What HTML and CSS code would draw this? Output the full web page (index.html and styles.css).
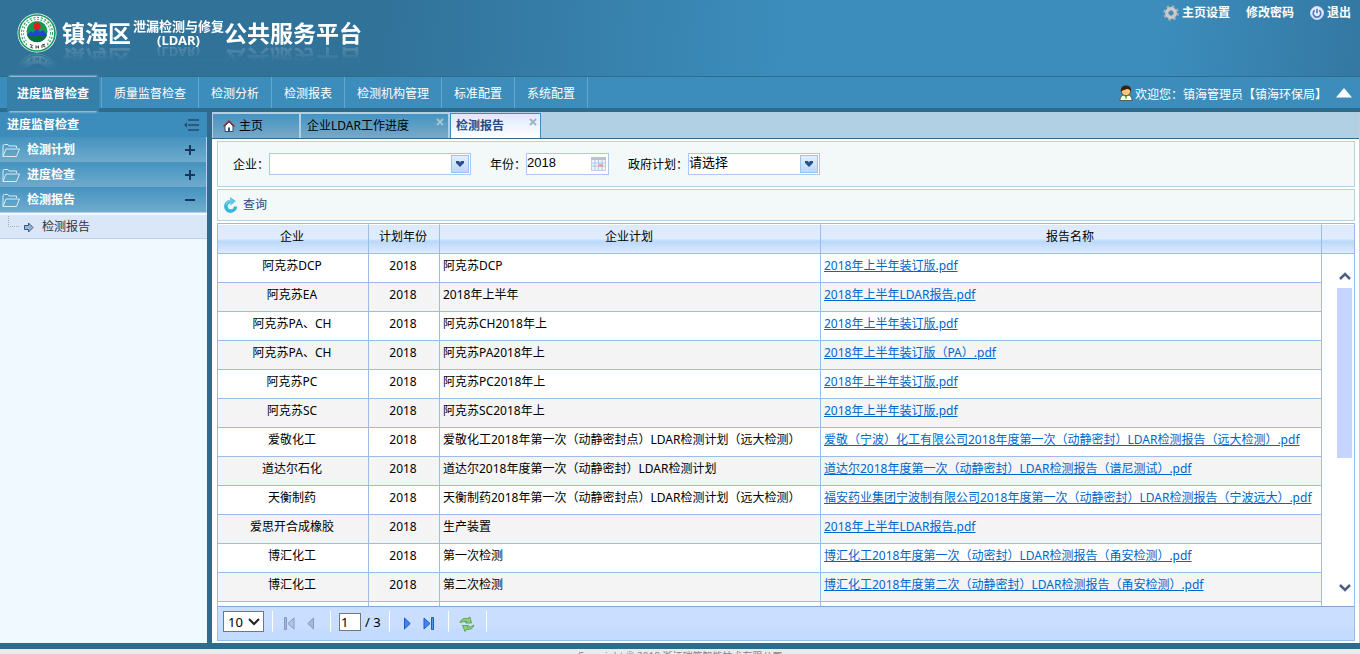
FILE: index.html
```html
<!DOCTYPE html>
<html lang="zh-CN">
<head>
    <meta charset="UTF-8">
    <meta name="viewport" content="width=device-width, initial-scale=1.0">
    <title>镇海区泄漏检测与修复(LDAR)公共服务平台</title>
    <link rel="stylesheet" href="styles.css">
</head>
<body>
    <header class="header">
        <div class="brand">
            <svg class="emblem" viewBox="0 0 40 40" aria-hidden="true">
                <circle cx="20" cy="20" r="19.5" fill="#fff"/>
                <circle cx="20" cy="20" r="18" fill="none" stroke="#159a58" stroke-width="1.6"/>
                <circle cx="20" cy="20" r="14.6" fill="none" stroke="#3aa871" stroke-width="3.2" stroke-dasharray="2 1.6"/>
                <circle cx="20" cy="20" r="14.6" fill="none" stroke="#fff" stroke-width="1"/>
                <circle cx="20" cy="18.5" r="10.5" fill="#169a52"/>
                <path d="M10 22l4-4 2 2 4-5 3 4 3-2 4 5z" fill="#2343d6"/>
                <path d="M10 22h20a10.5 10.5 0 0 1-20 0z" fill="#0b6b43"/>
                <circle cx="20" cy="13" r="3.6" fill="#f0141e"/>
                <path d="M10 29q10 6 20 0v5q-10 6-20 0z" fill="#fff"/>
                <path d="M13 31.500l2.500.8-2 2 2.500.8M19 32.500v3M21.500 32.500v3M19 34h2.500M25 35v-3l2.500-.8-1 2.300 2 .5" fill="none" stroke="#444" stroke-width="1"/>
            </svg>
            <h1 class="title">
                <span class="title-main">镇海区</span>
                <span class="title-sub"><span>泄漏检测与修复</span><span>(LDAR)</span></span>
                <span class="title-main">公共服务平台</span>
            </h1>
        </div>
        <div class="quick-links">
            <a href="#">
                <svg width="16" height="16" viewBox="0 0 16 16" aria-hidden="true">
                    <circle cx="8" cy="8" r="6.500" fill="none" stroke="#a9adb0" stroke-width="2.600" stroke-dasharray="2.600 2.500"/>
                    <circle cx="8" cy="8" r="4.200" fill="none" stroke="#c9cccf" stroke-width="3.400"/>
                    <circle cx="8" cy="8" r="2.200" fill="none" stroke="#888e92" stroke-width=".6"/>
                </svg>主页设置</a>
            <a href="#">修改密码</a>
            <a href="#">
                <svg width="14" height="14" viewBox="0 0 14 14" aria-hidden="true">
                    <circle cx="7" cy="7" r="6.500" fill="#e9effa" stroke="#c5d2e6"/>
                    <path d="M4.700 4.300a3.800 3.800 0 1 0 4.600 0M7 2.800v4.400" fill="none" stroke="#4d7cc7" stroke-width="1.700"/>
                </svg>退出</a>
        </div>
    </header>

    <nav class="nav">
        <ul class="menu">
            <li><a class="active" href="#">进度监督检查</a></li>
            <li><a href="#">质量监督检查</a></li>
            <li><a href="#">检测分析</a></li>
            <li><a href="#">检测报表</a></li>
            <li><a href="#">检测机构管理</a></li>
            <li><a href="#">标准配置</a></li>
            <li><a href="#">系统配置</a></li>
        </ul>
        <div class="user">
            <svg width="14" height="16" viewBox="0 0 14 16" aria-hidden="true">
                <path d="M1 15.500q0-5 4-5.500h4q4 .5 4 5.500z" fill="#fff" stroke="#4a4a3c" stroke-width=".8"/>
                <path d="M5.500 10.500h3L7 15z" fill="#5bb534"/>
                <circle cx="7" cy="6" r="4.700" fill="#fbc77c" stroke="#5a3716" stroke-width=".8"/>
                <path d="M1.800 6.500Q1.500.6 7 .6t5.200 5.900Q10.500 3.500 8 4 4 5 1.800 6.500z" fill="#3b2210"/>
            </svg>
            <span>欢迎您：镇海管理员【镇海环保局】</span>
            <button class="collapse-top" type="button" aria-label="收起">
                <svg width="16" height="10" viewBox="0 0 16 10"><path d="M8 0l8 9.500H0z" fill="#fff"/></svg>
            </button>
        </div>
    </nav>

    <div class="layout">
        <aside class="sidebar">
            <div class="sidebar-title">
                <h2>进度监督检查</h2>
                <button type="button" aria-label="折叠菜单">
                    <svg width="15" height="12" viewBox="0 0 15 12"><path d="M4 1h11M4 6h11M4 11h11" stroke="#234a66" stroke-width="1.600"/><path d="M0 6l3-2.500v5z" fill="#234a66"/></svg>
                </button>
            </div>
            <button class="group" type="button">
                <svg width="18" height="13" viewBox="0 0 18 13"><path d="M1 12.500V2q0-1.500 1.500-1.500H6L7 2h7.500v2M1 12.500L4 5h13.500L14.500 12.500z" fill="none" stroke="#d6ebf7"/></svg>
                <span>检测计划</span>
                <svg width="10" height="10" viewBox="0 0 10 10"><path d="M0 5h10M5 0v10" stroke="#17375e" stroke-width="2"/></svg>
            </button>
            <button class="group" type="button">
                <svg width="18" height="13" viewBox="0 0 18 13"><path d="M1 12.500V2q0-1.500 1.500-1.500H6L7 2h7.500v2M1 12.500L4 5h13.500L14.500 12.500z" fill="none" stroke="#d6ebf7"/></svg>
                <span>进度检查</span>
                <svg width="10" height="10" viewBox="0 0 10 10"><path d="M0 5h10M5 0v10" stroke="#17375e" stroke-width="2"/></svg>
            </button>
            <button class="group" type="button">
                <svg width="18" height="13" viewBox="0 0 18 13"><path d="M1 12.500V2q0-1.500 1.500-1.500H6L7 2h7.500v2M1 12.500L4 5h13.500L14.500 12.500z" fill="none" stroke="#d6ebf7"/></svg>
                <span>检测报告</span>
                <svg width="10" height="10" viewBox="0 0 10 10"><path d="M0 5h10" stroke="#17375e" stroke-width="2"/></svg>
            </button>
            <ul class="tree">
                <li>
                    <a href="#">
                        <svg width="26" height="22" viewBox="0 0 26 22"><path d="M.5 0v10.500H12" fill="none" stroke="#aaa" stroke-dasharray="1 1"/><path d="M16.500 9.500h4v-2.500l4.500 4.500-4.500 4.500v-2.500h-4z" fill="#8fb9dd" stroke="#3d5770"/></svg>
                        检测报告</a>
                </li>
            </ul>
        </aside>

        <main class="main">
            <div class="tabs">
                <div class="tab tab-home">
                    <svg width="12" height="12" viewBox="0 0 12 12"><path d="M2 6v5.500h8V6L6 2z" fill="#fff" stroke="#2f4a78"/><path d="M.5 6.500L6 1l5.500 5.500" fill="none" stroke="#8d3030" stroke-width="1.400"/><path d="M5 7.500h2V11H5z" fill="#2f4a78"/></svg>
                    <a href="#">主页</a>
                </div>
                <div class="tab">
                    <a href="#">企业LDAR工作进度</a>
                    <button type="button" aria-label="关闭"><svg width="8" height="8" viewBox="0 0 8 8"><path d="M1 1l6 6M7 1L1 7" stroke="#a3c3cf" stroke-width="2"/></svg></button>
                </div>
                <div class="tab selected">
                    <a href="#">检测报告</a>
                    <button type="button" aria-label="关闭"><svg width="8" height="8" viewBox="0 0 8 8"><path d="M1 1l6 6M7 1L1 7" stroke="#9bb8c2" stroke-width="2"/></svg></button>
                </div>
            </div>

            <div class="content">
                <form class="panel filters">
                    <div class="field">
                        <label for="company">企业：</label>
                        <span class="combo combo-wide">
                            <select id="company"><option></option></select>
                            <svg class="combo-arrow" viewBox="0 0 16 16"><path d="M4 5h3l1 1.500L9 5h3v2L8 11 4 7z" fill="#2a4f8f"/></svg>
                        </span>
                    </div>
                    <div class="field">
                        <label for="year">年份：</label>
                        <span class="combo combo-date">
                            <input type="text" id="year" value="2018">
                            <svg class="date-icon" viewBox="0 0 15 14"><path d="M.5.5h14v13H.5z" fill="#eef3fc" stroke="#c3cbdc"/><path d="M0 0h15v3H0z" fill="#b9c3d6"/><path d="M1 6h13M1 9h13M4 3v10M7.500 3v10M11 3v10" stroke="#b0c5ee"/><path d="M8 7h4v3H8z" fill="#eba48f"/></svg>
                        </span>
                    </div>
                    <div class="field">
                        <label for="plan">政府计划：</label>
                        <span class="combo combo-plan">
                            <select id="plan"><option>请选择</option></select>
                            <svg class="combo-arrow" viewBox="0 0 16 16"><path d="M4 5h3l1 1.500L9 5h3v2L8 11 4 7z" fill="#2a4f8f"/></svg>
                        </span>
                    </div>
                </form>

                <div class="panel toolbar">
                    <button class="query" type="button">
                        <svg width="16" height="16" viewBox="0 0 16 16"><path d="M12.500 9.500A4.800 4.800 0 1 1 7.500 4.500" fill="none" stroke="#35b7d8" stroke-width="3.600"/><path d="M7 0l6 4L7.500 8.500z" fill="#5cc8df"/><path d="M3 7.500a5 5 0 0 1 4.500-4" fill="none" stroke="#9de4f0"/></svg>
                        查询</button>
                </div>

                <section class="grid">
                    <div class="grid-view">
                        <table class="grid-table">
                            <colgroup>
                                <col class="col-company">
                                <col class="col-year">
                                <col class="col-plan">
                                <col>
                            </colgroup>
                            <thead>
                                <tr><th>企业</th><th>计划年份</th><th>企业计划</th><th>报告名称</th></tr>
                            </thead>
                            <tbody>
                                <tr><td>阿克苏DCP</td><td>2018</td><td>阿克苏DCP</td><td><a href="#">2018年上半年装订版.pdf</a></td></tr>
                                <tr><td>阿克苏EA</td><td>2018</td><td>2018年上半年</td><td><a href="#">2018年上半年LDAR报告.pdf</a></td></tr>
                                <tr><td>阿克苏PA、CH</td><td>2018</td><td>阿克苏CH2018年上</td><td><a href="#">2018年上半年装订版.pdf</a></td></tr>
                                <tr><td>阿克苏PA、CH</td><td>2018</td><td>阿克苏PA2018年上</td><td><a href="#">2018年上半年装订版（PA）.pdf</a></td></tr>
                                <tr><td>阿克苏PC</td><td>2018</td><td>阿克苏PC2018年上</td><td><a href="#">2018年上半年装订版.pdf</a></td></tr>
                                <tr><td>阿克苏SC</td><td>2018</td><td>阿克苏SC2018年上</td><td><a href="#">2018年上半年装订版.pdf</a></td></tr>
                                <tr><td>爱敬化工</td><td>2018</td><td>爱敬化工2018年第一次（动静密封点）LDAR检测计划（远大检测）</td><td><a href="#">爱敬（宁波）化工有限公司2018年度第一次（动静密封）LDAR检测报告（远大检测）.pdf</a></td></tr>
                                <tr><td>道达尔石化</td><td>2018</td><td>道达尔2018年度第一次（动静密封）LDAR检测计划</td><td><a href="#">道达尔2018年度第一次（动静密封）LDAR检测报告（谱尼测试）.pdf</a></td></tr>
                                <tr><td>天衡制药</td><td>2018</td><td>天衡制药2018年第一次（动静密封点）LDAR检测计划（远大检测）</td><td><a href="#">福安药业集团宁波制有限公司2018年度第一次（动静密封）LDAR检测报告（宁波远大）.pdf</a></td></tr>
                                <tr><td>爱思开合成橡胶</td><td>2018</td><td>生产装置</td><td><a href="#">2018年上半年LDAR报告.pdf</a></td></tr>
                                <tr><td>博汇化工</td><td>2018</td><td>第一次检测</td><td><a href="#">博汇化工2018年度第一次（动密封）LDAR检测报告（甬安检测）.pdf</a></td></tr>
                                <tr><td>博汇化工</td><td>2018</td><td>第二次检测</td><td><a href="#">博汇化工2018年度第二次（动静密封）LDAR检测报告（甬安检测）.pdf</a></td></tr>
                                <tr><td></td><td></td><td></td><td></td></tr>
                            </tbody>
                        </table>
                        <div class="scroll">
                            <div class="scroll-head"></div>
                            <div class="scroll-track">
                                <svg width="12" height="8" viewBox="0 0 12 8"><path d="M1 7l5-5 5 5" fill="none" stroke="#4d6185" stroke-width="2.500"/></svg>
                                <div class="scroll-thumb"></div>
                                <svg width="12" height="8" viewBox="0 0 12 8"><path d="M1 1l5 5 5-5" fill="none" stroke="#4d6185" stroke-width="2.500"/></svg>
                            </div>
                        </div>
                    </div>
                    <div class="pager">
                        <div class="pager-group">
                            <select class="page-size" aria-label="每页条数"><option>10</option></select>
                            <svg class="page-size-arrow" width="12" height="8" viewBox="0 0 12 8"><path d="M1 1l5 5 5-5" fill="none" stroke="#222" stroke-width="2"/></svg>
                        </div>
                        <div class="pager-group pager-prev">
                            <button type="button" aria-label="首页"><svg width="11" height="13" viewBox="0 0 11 13"><path d="M.5.500h2v12h-2z" fill="#a6b6d8" stroke="#8498c4"/><path d="M10 1v11L4 6.500z" fill="#b4c5e6" stroke="#8498c4"/></svg></button>
                            <button type="button" aria-label="上一页"><svg width="7" height="13" viewBox="0 0 7 13"><path d="M6.500 1v11L.8 6.500z" fill="#a6b9de" stroke="#8498c4"/></svg></button>
                        </div>
                        <div class="pager-group pager-page">
                            <input type="text" value="1" aria-label="页码">
                            <span>/ 3</span>
                        </div>
                        <div class="pager-group pager-next">
                            <button type="button" aria-label="下一页"><svg width="7" height="13" viewBox="0 0 7 13"><path d="M.5 1v11l5.700-5.500z" fill="#4384ee" stroke="#2458c5"/></svg></button>
                            <button type="button" aria-label="末页"><svg width="11" height="13" viewBox="0 0 11 13"><path d="M8.500.5h2v12h-2z" fill="#5a95f0" stroke="#2458c5"/><path d="M1 1v11l6-5.500z" fill="#4384ee" stroke="#2458c5"/></svg></button>
                        </div>
                        <div class="pager-group pager-refresh">
                            <button type="button" aria-label="刷新"><svg width="16" height="16" viewBox="0 0 16 16"><path d="M1 6.500Q3 1.500 9 2.500l2-1.500 1.500 6H6.500l1.500-1.500Q4.500 5 1 6.500z" fill="#8fce7d" stroke="#4b9a42" stroke-width=".8"/><path d="M15 9Q13.500 14 7.500 13.500l-1.500 2-2.500-6h6L8 11q4 .5 7-2z" fill="#8fce7d" stroke="#4b9a42" stroke-width=".8"/></svg></button>
                        </div>
                    </div>
                </section>
            </div>
        </main>
    </div>

    <footer class="footer">Copyright © 2018 浙江瑞策智能技术有限公司</footer>
</body>
</html>
```

FILE: styles.css
```css
* {
    box-sizing: border-box;
}
body {
    display: flex;
    flex-direction: column;
    height: 100vh;
    margin: 0;
    overflow: hidden;
    font: 12px/18px "Noto Sans", "Noto Sans CJK SC", sans-serif;
    color: #000;
    background: #fff;
}
h1, h2, ul {
    margin: 0;
    padding: 0;
}
ul {
    list-style: none;
}
a {
    color: inherit;
    text-decoration: none;
}
button, input, select {
    font: inherit;
    color: inherit;
}
button {
    display: flex;
    align-items: center;
    padding: 0;
    border: 0;
    background: none;
    cursor: pointer;
}
svg {
    flex: none;
}

/* header */
.header {
    display: flex;
    justify-content: space-between;
    align-items: flex-start;
    height: 76px;
    background: linear-gradient(95deg, #317299 0%, #317299 28%, #3c8dbc 58%, #3c8dbc 85%, #3478a3 100%);
}
.brand {
    display: flex;
    gap: 5px;
    padding: 13px 0 0 17px;
}
.emblem {
    width: 40px;
    height: 40px;
    -webkit-box-reflect: below 0 linear-gradient(transparent 60%, rgba(255, 255, 255, 0.25));
}
.title {
    display: flex;
    height: 34px;
    padding-top: 4px;
    color: #fff;
    -webkit-box-reflect: below -2px linear-gradient(transparent 50%, rgba(255, 255, 255, 0.2));
}
.title-main {
    font-size: 23px;
    line-height: 32px;
}
.title-sub {
    display: flex;
    flex-direction: column;
    align-items: center;
    padding: 2px 0 0 2px;
    font-size: 13px;
    line-height: 14px;
}
.quick-links {
    display: flex;
    gap: 16px;
    padding: 4px 9px 0 0;
    color: #fff;
    font-weight: bold;
}
.quick-links a {
    display: flex;
    align-items: center;
    gap: 3px;
}

/* main menu */
.nav {
    display: flex;
    justify-content: space-between;
    height: 36px;
    padding-left: 5px;
    color: #fff;
    background: #3c8dbc;
    border-top: 1px solid #2e6c8e;
    border-bottom: 4px solid #2e6c8e;
}
.menu {
    display: flex;
}
.menu li {
    border-right: 1px solid #63a7d0;
}
.menu a {
    display: block;
    padding: 0 12px;
    line-height: 34px;
}
.menu .active {
    position: relative;
    z-index: 1;
    margin: 0 2px;
    padding: 0 10px;
    font-weight: bold;
    background: #367fa9;
    box-shadow: 0 -3px 2px -2px #c5dcea, 0 3px 2px -2px #c5dcea;
}
.user {
    display: flex;
    align-items: center;
    gap: 2px;
    padding-right: 8px;
}
.user span {
    padding-top: 2px;
}
.user span,
.field label {
    font-family: "Noto Sans CJK TC", "Noto Sans CJK SC", sans-serif;
}
.collapse-top {
    margin-left: 7px;
}

.layout {
    display: flex;
    flex: 1;
    min-height: 0;
}

/* sidebar */
.sidebar {
    flex: none;
    width: 212px;
    background: #f0f9ff;
    border-right: 5px solid #2e6c8e;
}
.sidebar-title {
    display: flex;
    justify-content: space-between;
    align-items: center;
    height: 25px;
    padding: 0 8px 0 7px;
    color: #fff;
    background: #3c8dbc;
}
.sidebar-title h2 {
    font-size: 12px;
}
.group {
    width: 100%;
    height: 25px;
    gap: 7px;
    padding: 1px 11px 0 2px;
    color: #fff;
    font-weight: bold;
    text-align: left;
    background: linear-gradient(#4593bf, #6fabcd);
    border-right: 1px solid #b4d3ec;
}
.group span {
    flex: 1;
}
.tree {
    padding-top: 2px;
    border-top: 1px solid #b8d0ee;
}
.tree a {
    display: flex;
    align-items: center;
    gap: 8px;
    height: 24px;
    padding-left: 8px;
    color: #333;
    background: #dae7f9;
    border-bottom: 1px solid #bccff0;
}

/* tabs */
.main {
    display: flex;
    flex: 1;
    flex-direction: column;
    min-width: 0;
    border-right: 1px solid #ccc;
}
.tabs {
    display: flex;
    gap: 2px;
    height: 27px;
    padding: 1px 0 0 1px;
    background: #b1d0e4;
    border-bottom: 1px solid #2e6c8e;
}
.tab {
    display: flex;
    justify-content: space-between;
    width: 147px;
    margin-top: 1px;
    padding: 0 4px 0 6px;
    line-height: 24px;
    background: linear-gradient(#4394c3, #7aa8c6);
}
.tab-home {
    align-items: center;
    justify-content: flex-start;
    gap: 4px;
    width: 86px;
    padding-left: 10px;
}
.tab button {
    height: 8px;
    margin-top: 4px;
}
.tab.selected {
    width: 91px;
    margin-top: 0;
    padding: 0 3px 0 5px;
    color: #2c4b84;
    font-weight: bold;
    background: linear-gradient(#dfe8fb, #fff);
    border: 1px solid #3c8dbc;
    border-bottom: 0;
}

/* content */
.content {
    display: flex;
    flex: 1;
    flex-direction: column;
    gap: 2px;
    min-height: 0;
    padding: 2px 4px 2px 5px;
}
.panel {
    flex: none;
    background: #f3f9f9;
    border: 1px solid #b3d4df;
}
.filters {
    display: flex;
    align-items: center;
    gap: 19px;
    height: 46px;
    padding-left: 15px;
}
.field {
    display: flex;
    align-items: center;
}
.combo {
    position: relative;
    height: 22px;
    background: #fff;
    border: 1px solid #aac8f0;
}
.combo-wide {
    width: 202px;
}
.combo-date {
    width: 83px;
}
.combo-plan {
    width: 132px;
}
.combo select,
.combo input {
    display: block;
    width: 100%;
    height: 17px;
    padding: 0;
    border: 0;
    outline: 0;
    background: none;
    appearance: none;
    font: 13px/17px "Liberation Sans", "Noto Sans CJK SC", sans-serif;
}
.combo-arrow {
    position: absolute;
    top: 1px;
    right: 1px;
    width: 18px;
    height: 18px;
    background: linear-gradient(#e2eefe, #bcd8fa);
    border: 1px solid #9dc3f2;
    pointer-events: none;
}
.date-icon {
    position: absolute;
    top: 3px;
    right: 2px;
    width: 15px;
    height: 14px;
}
.toolbar {
    display: flex;
    height: 32px;
    padding-left: 5px;
}
.query {
    gap: 4px;
    color: #2c4b84;
}

/* grid */
.grid {
    display: flex;
    flex: 1;
    flex-direction: column;
    min-height: 0;
    border: 1px solid #99bde9;
}
.grid-view {
    display: flex;
    flex: 1;
    min-height: 0;
    overflow: hidden;
}
.grid-table {
    flex: 1;
    width: 100%;
    min-width: 0;
    height: max-content;
    table-layout: fixed;
    border-collapse: separate;
    border-spacing: 0;
}
.col-company {
    width: 151px;
}
.col-year {
    width: 71px;
}
.col-plan {
    width: 381px;
}
.grid-table th,
.scroll-head {
    height: 30px;
    background: linear-gradient(#dde9fd, #e0edfe 48%, #bad8fa 58%, #deecff);
    border-top: 1px solid #fff;
    border-bottom: 1px solid #9cbde8;
}
.grid-table th {
    padding: 0 2px 4px 0;
    font-weight: normal;
    border-right: 1px solid #9cbde8;
}
.grid-table td {
    height: 29px;
    padding: 0 5px 4px 3px;
    overflow: hidden;
    white-space: nowrap;
    border-right: 1px solid #9cbde8;
    border-bottom: 1px solid #9cbde8;
}
.grid-table td:nth-child(-n+2) {
    text-align: center;
}
.grid-table tr:nth-child(even) td {
    background: #f4f4f4;
}
.grid-table td a {
    color: #0066cc;
    text-decoration: underline;
}
.scroll {
    display: flex;
    flex: none;
    flex-direction: column;
    width: 32px;
}
.scroll-track {
    display: flex;
    flex: 1;
    flex-direction: column;
    align-items: center;
    gap: 8px;
    padding: 18px 2px 14px 15px;
}
.scroll-thumb {
    width: 100%;
    height: 170px;
    margin-bottom: auto;
    background: #c5d5ff;
}

/* pager */
.pager {
    display: flex;
    flex: none;
    height: 34px;
    padding: 4px 0 8px 5px;
    font-size: 13px;
    background: linear-gradient(#cadeff 60%, #c3dbff 70%);
    border-top: 1px solid #84a3d0;
}
.pager-group {
    position: relative;
    display: flex;
    align-items: center;
    padding-right: 8px;
    border-right: 1px solid #fff;
}
.page-size {
    width: 41px;
    height: 21px;
    padding: 0 4px;
    line-height: 16px;
    background: #fff;
    border: 1px solid #767676;
    border-radius: 0;
    appearance: none;
}
.page-size-arrow {
    position: absolute;
    top: 7px;
    right: 12px;
    pointer-events: none;
}
.pager-prev,
.pager-next {
    gap: 12px;
    padding: 4px 16px 0 11px;
}
.pager-next {
    padding: 4px 14px 0 14px;
}
.pager-page {
    gap: 4px;
    padding-left: 8px;
}
.pager-page input {
    width: 22px;
    height: 18px;
    padding: 0 1px;
    background: #fff;
    border: 1px solid #767676;
}
.pager-refresh {
    padding: 4px 11px 0 10px;
}

.footer {
    flex: none;
    height: 11px;
    overflow: hidden;
    font-size: 10px;
    line-height: 14px;
    color: #888;
    text-align: center;
    background: #e6eeed;
    border-top: 6px solid #2e6c8e;
}
```
